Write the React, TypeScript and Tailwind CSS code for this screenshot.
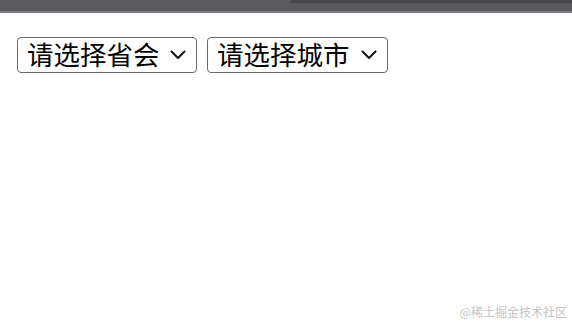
import React from "react";

const font = { fontFamily: '"Noto Sans CJK SC", "Noto Sans", sans-serif' };

function Chevron() {
  return (
    <svg width="16" height="10" viewBox="0 0 16 10" fill="none" className="shrink-0">
      <path d="M1.5 1.5 L8 8 L14.5 1.5" stroke="#111" strokeWidth="2" strokeLinecap="round" strokeLinejoin="round" />
    </svg>
  );
}

function FakeSelect({ label, width }: { label: string; width: string }) {
  return (
    <div
      className={`flex h-[36px] ${width} items-center justify-between rounded-[4px] border border-[#6a6a6a] bg-white pl-[9px] pr-[10px] text-[26.5px] leading-none text-black`}
    >
      <span className="-mt-[1px] whitespace-nowrap">{label}</span>
      <Chevron />
    </div>
  );
}

export default function App() {
  return (
    <div className="relative h-[324px] w-[572px] overflow-hidden bg-white" style={font}>
      {/* browser chrome strip */}
      <div className="flex h-[11px] bg-[#5b5b5f]">
        <div className="w-[291px]" />
        <div className="h-[3px] flex-1 bg-[#48484c]" />
      </div>
      <div className="h-[2px] bg-[#7d7d7f]" />

      <div className="flex gap-[10px] pl-[17px] pt-[24px]">
        <FakeSelect label="请选择省会" width="w-[180px]" />
        <FakeSelect label="请选择城市" width="w-[181px]" />
      </div>

      <div className="absolute bottom-[6px] right-[5px] text-[12px] leading-none text-[#c4c4c4]">
        @稀土掘金技术社区
      </div>
    </div>
  );
}
